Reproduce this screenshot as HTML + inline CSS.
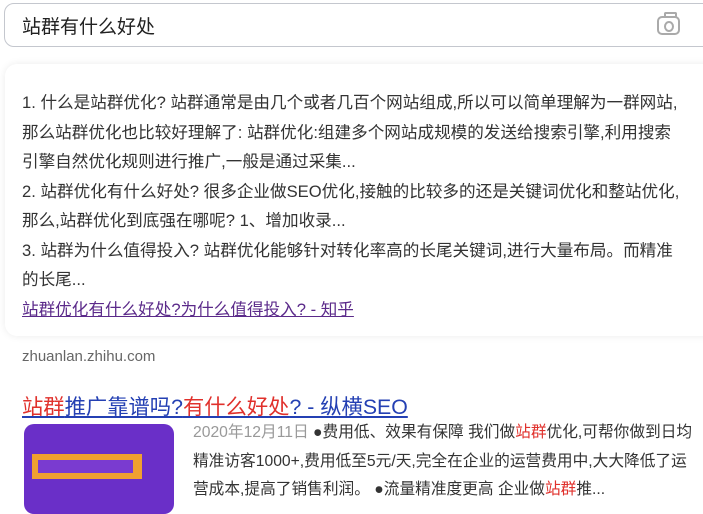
<html><head><style>
body{margin:0;width:703px;height:500px;overflow:hidden;background:#fff;font-family:"Liberation Sans","Noto Sans CJK SC",sans-serif;color:#333;position:relative}
.s{position:absolute;left:4px;top:3px;width:710px;height:44px;border:1px solid #c4c7ce;border-radius:10px;box-sizing:border-box}
.s span{position:absolute;left:17px;top:8px;font-size:19px;color:#222}
.cam{position:absolute;left:657px;top:16px;width:23px;height:19px;border:2px solid #aaa;border-radius:5px;box-sizing:border-box}
.cam:before{content:"";position:absolute;left:5px;top:-6px;width:9px;height:4px;border:2px solid #aaa;border-bottom:none;border-radius:2px 2px 0 0}
.cam:after{content:"";position:absolute;left:5px;top:3px;width:6px;height:7px;border:2px solid #aaa;border-radius:50%}
.card{position:absolute;left:5px;top:64px;width:720px;height:272px;background:#fff;border-radius:12px;box-shadow:0 0 8px rgba(0,0,0,.08)}
.t{position:absolute;left:22px;top:88px;width:700px;white-space:nowrap;font-size:16.6px;line-height:29.5px;color:#333}
.t a{color:#5b2a8a;text-decoration:underline}
.site{position:absolute;left:22px;top:348px;font-size:15px;color:#666}
.title{position:absolute;left:22px;top:390px;font-size:21.3px;color:#2440b3;text-decoration:underline}
.r{color:#e0312c}
.img{position:absolute;left:24px;top:424px;width:150px;height:90px;border-radius:10px;background:#6a2fc8}
.img div{position:absolute;left:8px;top:30px;width:110px;height:25px;background:#f0a030}
.img i{position:absolute;left:14px;top:36px;width:95px;height:13px;background:#7a3bd0}
.d{position:absolute;left:193px;top:419px;width:520px;white-space:nowrap;font-size:15.7px;line-height:28.5px;color:#333}
.g{color:#999}
</style></head><body>
<div class="s"><span>站群有什么好处</span></div><div class="cam"></div>
<div class="card"></div>
<div class="t">1. 什么是站群优化? 站群通常是由几个或者几百个网站组成,所以可以简单理解为一群网站,<br>那么站群优化也比较好理解了: 站群优化:组建多个网站成规模的发送给搜索引擎,利用搜索<br>引擎自然优化规则进行推广,一般是通过采集...<br>2. 站群优化有什么好处? 很多企业做SEO优化,接触的比较多的还是关键词优化和整站优化,<br>那么,站群优化到底强在哪呢? 1、增加收录...<br>3. 站群为什么值得投入? 站群优化能够针对转化率高的长尾关键词,进行大量布局。而精准<br>的长尾...<br><a>站群优化有什么好处?为什么值得投入? - 知乎</a></div>
<div class="site">zhuanlan.zhihu.com</div>
<div class="title"><span class="r">站群</span>推广靠谱吗?<span class="r">有什么好处</span>? - 纵横SEO</div>
<div class="img"><div></div><i></i></div>
<div class="d"><span class="g">2020年12月11日</span> ●费用低、效果有保障 我们做<span class="r">站群</span>优化,可帮你做到日均<br>精准访客1000+,费用低至5元/天,完全在企业的运营费用中,大大降低了运<br>营成本,提高了销售利润。 ●流量精准度更高 企业做<span class="r">站群</span>推...</div>
</body></html>
